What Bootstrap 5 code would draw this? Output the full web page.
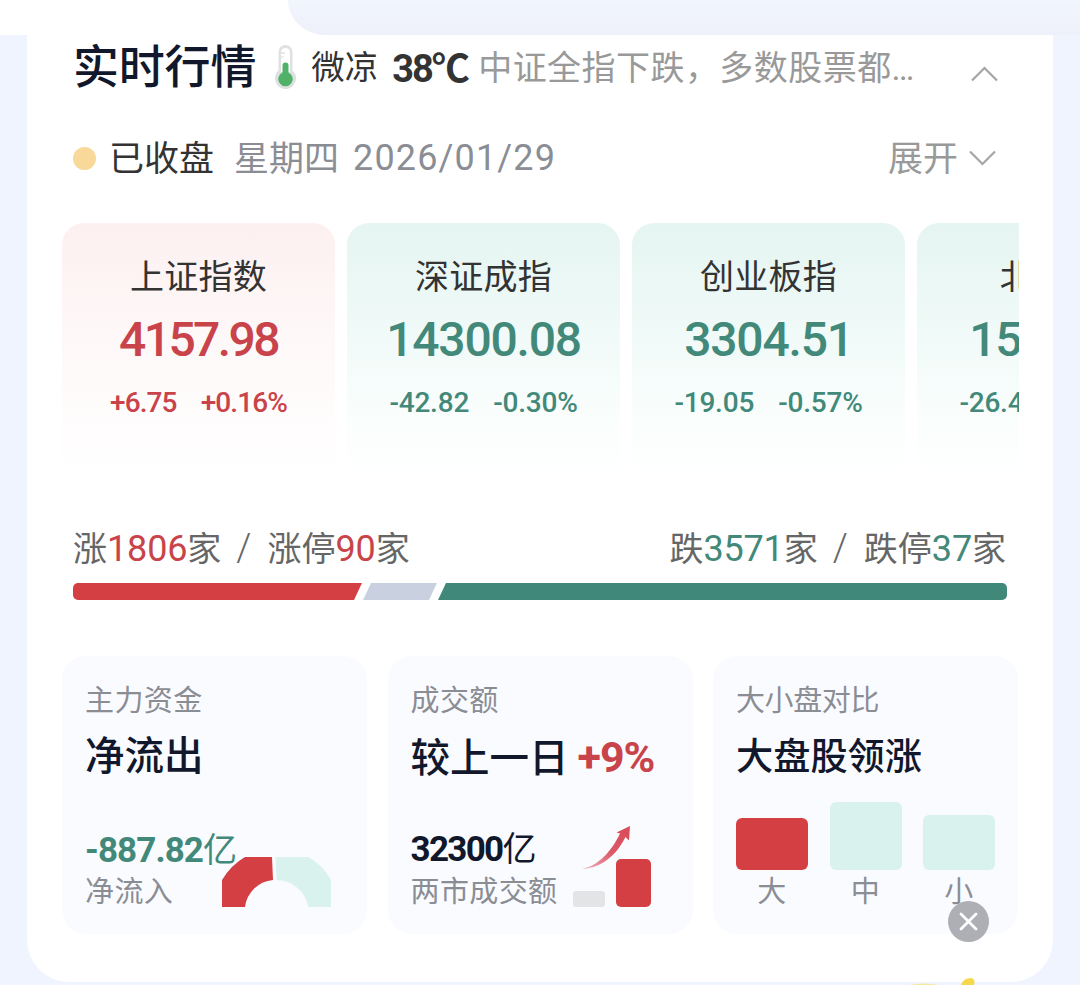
<!DOCTYPE html>
<html lang="zh-CN">
<head>
  <meta charset="UTF-8">
  <meta name="viewport" content="width=device-width, initial-scale=1">
  <title>实时行情</title>
  <link href="https://cdn.jsdelivr.net/npm/bootstrap@5.3.3/dist/css/bootstrap.min.css" rel="stylesheet">
  <style>
    body {
      background: #f0f4fe;
      font-family: Roboto, "Noto Sans CJK SC", sans-serif;
      color: #333;
      height: 985px;
      overflow: hidden;
    }

    .ink { color: #12182c; }
    .soft { color: #8b8d95; }
    .up { color: #c9434a; }
    .down { color: #42897a; }

    /* tab strip */
    .tab-strip { height: 35px; background: #fff; }
    .tab-rest {
      margin-left: 288px;
      height: 35px;
      border-bottom-left-radius: 38px 36px;
      background: linear-gradient(#f1f5fe, #eef0fa);
    }

    .panel {
      margin: 0 27px;
      height: 947px;
      padding: 0 35px;
      background: #fff;
      border-radius: 0 0 42px 42px;
    }

    /* title row */
    .title-row { height: 62px; padding: 0 20px 0 11px; }
    .title-row h1 { font-size: 46px; font-weight: 500; letter-spacing: -.2px; line-height: 62px; padding-top: 2px; }
    .thermo { margin: 1px 14px 0 18px; }
    .mood { font-size: 33.5px; line-height: 62px; padding-top: 4px; }
    .degree { font-size: 38px; line-height: 62px; width: 84px; padding: 5px 0 0 14px; letter-spacing: -2px; white-space: nowrap; }
    .news { font-size: 34px; letter-spacing: .45px; line-height: 62px; padding-top: 4px; color: #999; width: 441px; }

    /* session row */
    .session-row { height: 44px; margin-top: 39px; padding: 0 22px 0 11px; font-size: 35px; line-height: 44px; }
    .session-row span { position: relative; }
    .session-cjk { padding-top: 3px; }
    .state-dot { width: 23px; height: 23px; background: #f8d999; margin-right: 13px; }
    .week-day { margin-left: 20px; }
    .session-date { margin-left: 14px; font-size: 36px; letter-spacing: 1.15px; }
    .grey9 { color: #999; }
    .chev-down { margin-left: 11px; }

    /* indices */
    .index-list { height: 257px; margin: 43px -1px 0 0; gap: 12px; }
    .index-item { flex: 0 0 273px; border-radius: 22px 22px 0 0; padding-top: 30px; }
    .index-item.rise { background: linear-gradient(#fdf0f1, #fef8f8 45%, #fffdfd 80%, #fff); }
    .index-item.fall { background: linear-gradient(#e5f5f1, #f0faf8 42%, #fafefd 76%, #fff); }
    .index-name { font-size: 34px; line-height: 48px; letter-spacing: .3px; }
    .index-price { font-size: 48px; font-weight: 500; line-height: 56px; margin-top: 11px; letter-spacing: -1.2px; }
    .index-item.rise .index-price { letter-spacing: -2.6px; }
    .index-move { font-size: 28px; font-weight: 500; line-height: 34px; margin-top: 18px; gap: 24px; letter-spacing: -.2px; }
    .index-item.rise .index-move { letter-spacing: -.9px; }

    /* breadth */
    .breadth-text { height: 46px; margin-top: 45px; padding: 0 12px 0 11px; font-size: 34px; line-height: 46px; color: #666; white-space: nowrap; }
    .breadth-text b { font-size: 36px; font-weight: 400; letter-spacing: -.15px; }
    .breadth-text i { font-style: normal; font-weight: 300; font-size: 38px; margin: 0 16px 0 15px; }
    .breadth-bar { height: 17px; margin: 12px 11px 0; gap: 1px; border-radius: 5px; }
    .seg-up { width: 289px; background: #d43f43; clip-path: polygon(0 0, 100% 0, calc(100% - 8px) 100%, 0 100%); }
    .seg-flat { width: 74px; background: #c9d1e0; clip-path: polygon(8px 0, 100% 0, calc(100% - 8px) 100%, 0 100%); }
    .seg-down { background: #40897a; clip-path: polygon(8px 0, 100% 0, 100% 100%, 0 100%); }

    /* stat tiles */
    .tiles { margin-top: 56px; gap: 20.5px; }
    .tile { flex: 0 0 305px; height: 278px; padding: 26px 22px 0 23px; border-radius: 24px; background: #fafbff; }
    .tile-label { font-size: 29px; line-height: 38px; letter-spacing: .4px; white-space: nowrap; }
    .tile-label.close-set { letter-spacing: -.4px; }
    .tile-head { font-size: 39.5px; font-weight: 500; line-height: 52px; margin-top: 11px; white-space: nowrap; }
    .tile-head.tight { font-size: 37.2px; }
    .tile-head .pct { font-size: 43px; font-weight: 700; margin-left: 9px; letter-spacing: -1px; }
    .tile-value { font-size: 34px; line-height: 44px; white-space: nowrap; }
    .tile-value b { font-size: 35px; letter-spacing: -.9px; }
    .tile-value.total b { letter-spacing: -1.7px; }
    .tile-foot { height: 106px; margin-top: 42px; }
    .flow-text { padding-bottom: 20px; }
    .turnover-text { padding-bottom: 22px; }
    .turnover-text .tile-value { margin-bottom: 1px; }
    .gauge { margin-left: -15px; margin-bottom: 24px; }
    .trend { margin-left: 15px; margin-bottom: 25px; }
    .cap-bars { margin-top: 18px; height: 69px; width: 259px; }
    .cap-bar { width: 72px; border-radius: 6px; background: #d9f2ed; }
    .cap-bar.hot { background: #d43f43; }
    .cap-names { width: 259px; padding-top: 3px; }
    .cap-names span { width: 72px; text-align: center; }

    /* floating ad */
    .ad-close { position: absolute; left: 948px; top: 901px; }
    .ad-peek { position: absolute; left: 905px; top: 975px; }
  </style>
</head>
<body>
  <div class="tab-strip"><div class="tab-rest"></div></div>

  <main class="panel">
    <header class="title-row d-flex align-items-center">
      <h1 class="ink mb-0">实时行情</h1>
      <svg class="thermo flex-shrink-0" width="23" height="44" viewBox="0 0 23 44">
        <path d="M4.500 7a7 7 0 0 1 14 0v18.500a10.600 10.600 0 1 1-14 0z" fill="#dfe1e1"/>
        <path d="M7 7.500a4.500 4.500 0 0 1 9 0V27H7z" fill="#fff"/>
        <path d="M8.500 20.500a3 3 0 0 1 6 0v7a7.200 7.200 0 1 1-6 0z" fill="#50b168"/>
        <path d="M7 8h4M7 12h2.500" stroke="#d5d6d6" stroke-width="1.200"/>
      </svg>
      <span class="mood flex-shrink-0">微凉</span>
      <b class="degree flex-shrink-0">38℃</b>
      <span class="news flex-shrink-0 ms-3">中证全指下跌，多数股票都…</span>
      <svg class="ms-auto mt-3" width="27" height="16" viewBox="0 0 27 16" fill="none" stroke="#a5a5a5" stroke-width="2.200"><path d="M1 14.500L13.500 2 26 14.500"/></svg>
    </header>

    <div class="session-row d-flex align-items-center">
      <span class="state-dot rounded-circle"></span>
      <span class="session-cjk">已收盘</span>
      <span class="session-cjk week-day soft">星期四</span>
      <span class="session-date soft">2026/01/29</span>
      <span class="session-cjk ms-auto grey9">展开</span>
      <svg class="chev-down" width="27" height="16" viewBox="0 0 27 16" fill="none" stroke="#a5a5a5" stroke-width="2.200"><path d="M1 1.500L13.500 14 26 1.500"/></svg>
    </div>

    <section class="index-list d-flex overflow-hidden text-center">
      <div class="index-item rise">
        <div class="index-name">上证指数</div>
        <div class="index-price up">4157.98</div>
        <div class="index-move up d-flex justify-content-center"><span>+6.75</span><span>+0.16%</span></div>
      </div>
      <div class="index-item fall">
        <div class="index-name">深证成指</div>
        <div class="index-price down">14300.08</div>
        <div class="index-move down d-flex justify-content-center"><span>-42.82</span><span>-0.30%</span></div>
      </div>
      <div class="index-item fall">
        <div class="index-name">创业板指</div>
        <div class="index-price down">3304.51</div>
        <div class="index-move down d-flex justify-content-center"><span>-19.05</span><span>-0.57%</span></div>
      </div>
      <div class="index-item fall">
        <div class="index-name">北证50</div>
        <div class="index-price down">1531.55</div>
        <div class="index-move down d-flex justify-content-center"><span>-26.46</span><span>-1.70%</span></div>
      </div>
    </section>

    <section>
      <div class="breadth-text d-flex justify-content-between">
        <div>涨<b class="up">1806</b>家<i>/</i>涨停<b class="up">90</b>家</div>
        <div>跌<b class="down">3571</b>家<i>/</i>跌停<b class="down">37</b>家</div>
      </div>
      <div class="breadth-bar d-flex overflow-hidden">
        <div class="seg-up"></div>
        <div class="seg-flat"></div>
        <div class="seg-down flex-grow-1"></div>
      </div>
    </section>

    <section class="tiles d-flex">
      <div class="tile">
        <div class="tile-label soft">主力资金</div>
        <div class="tile-head ink">净流出</div>
        <div class="tile-foot d-flex align-items-end">
          <div class="flow-text">
            <div class="tile-value down"><b>-887.82</b>亿</div>
            <div class="tile-label soft">净流入</div>
          </div>
          <svg class="gauge flex-shrink-0" width="109" height="50" viewBox="0 0 109 50">
            <path d="M0 50V23Q9 8 23 0H50L51 23A31 31 0 0 0 23 50z" fill="#d43f43"/>
            <path d="M53.500 0H86Q101 8 109 23V50H86.500A33 33 0 0 0 54.500 23z" fill="#d9f2ed"/>
          </svg>
        </div>
      </div>

      <div class="tile">
        <div class="tile-label soft">成交额</div>
        <div class="tile-head ink">较上一日<span class="pct up">+9%</span></div>
        <div class="tile-foot d-flex align-items-end">
          <div class="turnover-text">
            <div class="tile-value total ink"><b>32300</b>亿</div>
            <div class="tile-label soft">两市成交额</div>
          </div>
          <svg class="trend flex-shrink-0" width="80" height="83" viewBox="0 0 80 83">
            <defs>
              <linearGradient id="arrowFade" x1="0" y1="1" x2="1" y2="0">
                <stop offset="0" stop-color="#eeb3bb"/>
                <stop offset=".5" stop-color="#dc5a69"/>
                <stop offset="1" stop-color="#d94a56"/>
              </linearGradient>
            </defs>
            <path d="M9 44C25 41 38 27 47 8.500L43.500 7.500 57 1 56 15.500 52.500 12C43 31 28 43 9 44z" fill="url(#arrowFade)"/>
            <rect y="66" width="32" height="16" rx="3" fill="#e3e4e6"/>
            <rect x="43" y="34" width="35" height="48" rx="5" fill="#d43f43"/>
          </svg>
        </div>
      </div>

      <div class="tile">
        <div class="tile-label close-set soft">大小盘对比</div>
        <div class="tile-head tight ink">大盘股领涨</div>
        <div class="cap-bars d-flex justify-content-between align-items-end">
          <div class="cap-bar hot" style="height: 52px"></div>
          <div class="cap-bar" style="height: 68px"></div>
          <div class="cap-bar" style="height: 55px"></div>
        </div>
        <div class="cap-names tile-label soft d-flex justify-content-between">
          <span>大</span><span>中</span><span>小</span>
        </div>
      </div>
    </section>
  </main>

  <svg class="ad-close" width="41" height="41" viewBox="0 0 41 41">
    <circle cx="20.500" cy="20.500" r="20.500" fill="#aeafb4"/>
    <path d="M13 13l15 15M28 13L13 28" stroke="#fff" stroke-width="2.800" stroke-linecap="round"/>
  </svg>
  <svg class="ad-peek" width="75" height="10" viewBox="0 0 75 10">
    <path d="M5 10Q19 7 34 10z" fill="#f3ea9a"/>
    <path d="M56 10Q58 3 66 3 71 4 69 10z" fill="#f5d94a"/>
  </svg>

  <script src="https://cdn.jsdelivr.net/npm/bootstrap@5.3.3/dist/js/bootstrap.bundle.min.js"></script>
</body>
</html>
